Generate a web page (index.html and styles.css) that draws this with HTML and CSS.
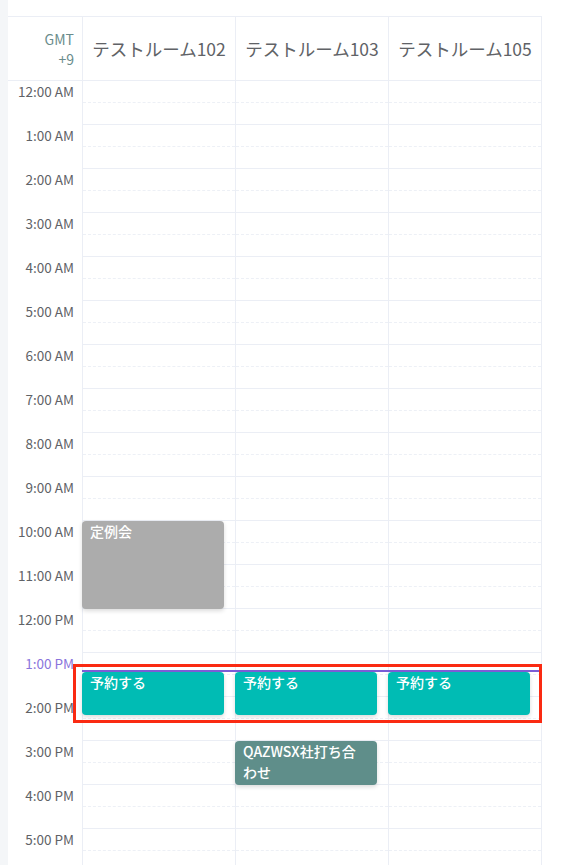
FILE: index.html
```html
<!DOCTYPE html>
<html lang="ja">
<head>
  <meta charset="UTF-8">
  <meta name="viewport" content="width=device-width, initial-scale=1.0">
  <title>会議室予約</title>
  <link rel="stylesheet" href="styles.css">
</head>
<body>
  <div class="page">
    <div class="side-strip"></div>
    <div class="main">
      <div class="calendar">
        <div class="head-row">
          <div class="tz">GMT<br>+9</div>
          <div class="room">テストルーム102</div>
          <div class="room">テストルーム103</div>
          <div class="room">テストルーム105</div>
        </div>

        <div class="body-row">
          <div class="gutter">
            <div class="time">12:00 AM</div>
            <div class="time">1:00 AM</div>
            <div class="time">2:00 AM</div>
            <div class="time">3:00 AM</div>
            <div class="time">4:00 AM</div>
            <div class="time">5:00 AM</div>
            <div class="time">6:00 AM</div>
            <div class="time">7:00 AM</div>
            <div class="time">8:00 AM</div>
            <div class="time">9:00 AM</div>
            <div class="time">10:00 AM</div>
            <div class="time">11:00 AM</div>
            <div class="time">12:00 PM</div>
            <div class="time now">1:00 PM</div>
            <div class="time">2:00 PM</div>
            <div class="time">3:00 PM</div>
            <div class="time">4:00 PM</div>
            <div class="time">5:00 PM</div>
          </div>

          <div class="col" id="col-102">
            <div class="event gray" style="top: 440px; height: 88px;">定例会</div>
            <div class="event teal" style="top: 591px; height: 43px;">予約する</div>
          </div>
          <div class="col" id="col-103">
            <div class="event teal" style="top: 591px; height: 43px;">予約する</div>
            <div class="event slate" style="top: 660px; height: 44px;">QAZWSX社打ち合わせ</div>
          </div>
          <div class="col" id="col-105">
            <div class="event teal" style="top: 591px; height: 43px;">予約する</div>
          </div>

          <div class="now-line" style="top: 589px;"></div>
          <div class="highlight"></div>
        </div>
      </div>
    </div>
  </div>

  <script src="app.js"></script>
</body>
</html>
```

FILE: app.js
```js
// fill each room column with hour slots (two half-hour cells per hour)
document.querySelectorAll('.col').forEach(function (col) {
  for (var h = 0; h < 18; h++) {
    var slot = document.createElement('div');
    slot.className = 'slot';
    slot.innerHTML = '<div class="half"></div><div class="half"></div>';
    col.insertBefore(slot, col.firstChild);
  }
});
```

FILE: styles.css
```css
html, body {
  margin: 0;
  height: 100%;
  overflow: hidden;
}

body {
  font-family: "Noto Sans CJK JP", "Noto Sans", sans-serif;
  color: #606266;
  background-color: #fff;
}

.page {
  display: flex;
  height: 100%;
}

.side-strip {
  width: 8px;
  flex-shrink: 0;
  background-color: #f4f6f8;
}

.main {
  padding-top: 16px;
}

.calendar {
  width: 534px;
  border-top: 1px solid #ebeef5;
  border-right: 1px solid #ebeef5;
  box-sizing: border-box;
}

.head-row {
  display: grid;
  grid-template-columns: 74px repeat(3, 153px);
  height: 63px;
  border-bottom: 1px solid #ebeef5;
}

.tz {
  font-size: 14px;
  line-height: 20px;
  color: #6a8c8c;
  text-align: right;
  padding-right: 8px;
  align-self: center;
}

.room {
  display: flex;
  align-items: center;
  justify-content: center;
  font-size: 17.5px;
  border-left: 1px solid #ebeef5;
  white-space: nowrap;
}

.body-row {
  position: relative;
  display: grid;
  grid-template-columns: 74px repeat(3, 153px);
}

.gutter {
  display: flex;
  flex-direction: column;
}

.time {
  height: 44px;
  font-size: 13.5px;
  line-height: 21px;
  text-align: right;
  padding-right: 8px;
  color: #606266;
  white-space: nowrap;
}

.time.now {
  color: #8a74dc;
}

.col {
  position: relative;
  border-left: 1px solid #ebeef5;
}

.slot {
  height: 44px;
  display: flex;
  flex-direction: column;
}

.half {
  height: 22px;
  box-sizing: border-box;
  border-bottom: 1px dashed #edf0f6;
}

.half + .half {
  border-bottom: 1px solid #ebeef5;
}

.event {
  position: absolute;
  left: -1px;
  width: 142px;
  box-sizing: border-box;
  padding: 0 9px 0 8px;
  border-radius: 4px;
  font-size: 14px;
  font-weight: 500;
  line-height: 21px;
  color: #fff;
  box-shadow: 0 2px 4px rgba(0, 0, 0, 0.14);
  overflow: hidden;
}

.event.gray {
  background-color: #acacac;
}

.event.teal {
  background-color: #00bcb4;
}

.event.slate {
  background-color: #5f8e8a;
}

.now-line {
  position: absolute;
  left: 74px;
  right: 0;
  height: 2px;
  background-color: #7b5dd6;
}

.highlight {
  position: absolute;
  left: 65px;
  top: 583px;
  width: 469px;
  height: 59px;
  box-sizing: border-box;
  border: 3px solid #fa2a12;
}
```
